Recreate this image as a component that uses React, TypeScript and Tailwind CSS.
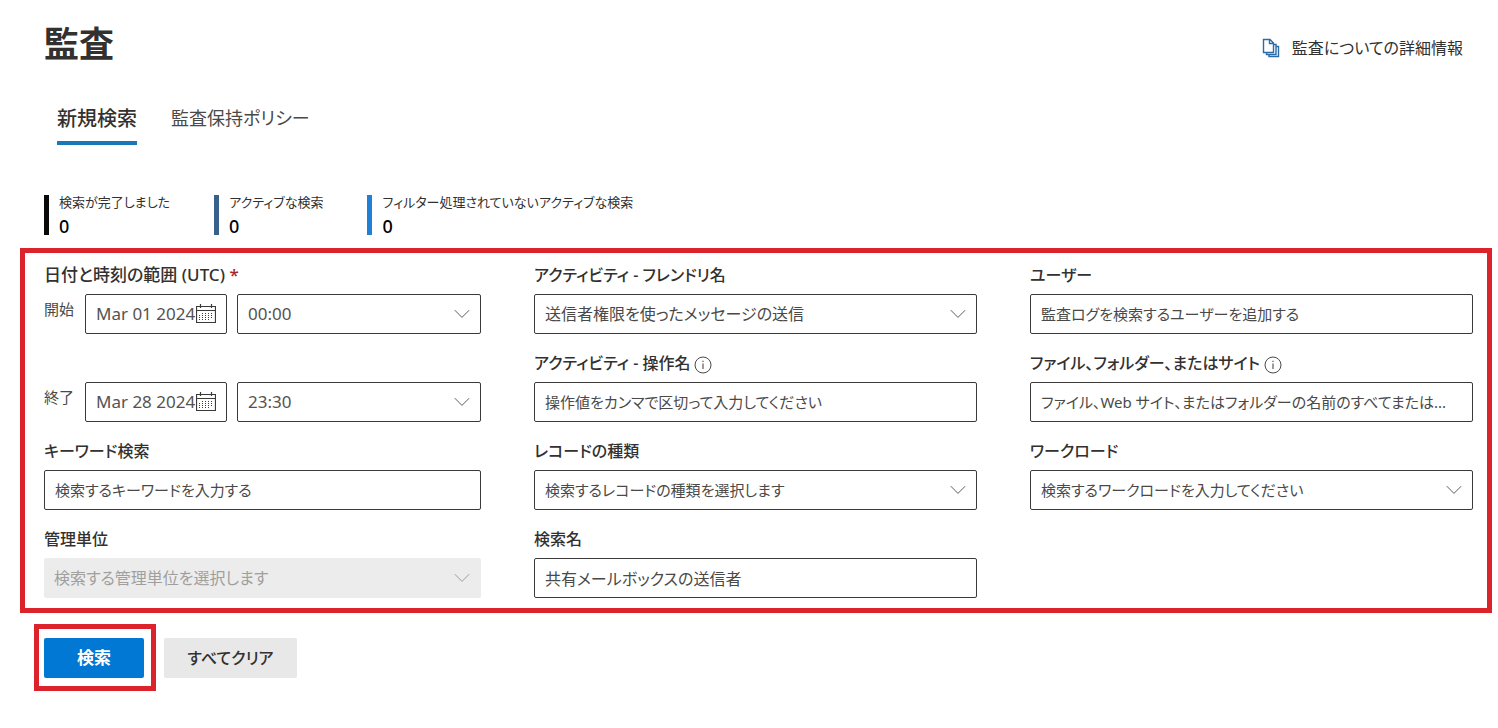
import type { ReactNode } from "react";

const boxClass = "block h-10 w-full rounded-xs border border-[#3b3a39] bg-white px-2.5 leading-6";
const promptClass = "text-[15px] text-[#4a4948] placeholder:text-[#4a4948] placeholder:opacity-100";
const valueClass = "text-[16px] text-[#4a4948]";

function ChevronDown({ className = "text-[#4a4948]" }: { className?: string }) {
  return (
    <svg
      aria-hidden="true"
      className={`pointer-events-none absolute top-3 right-[11px] h-4 w-4 ${className}`}
      viewBox="0 0 16 16"
      fill="none"
      stroke="currentColor"
      strokeWidth="0.9"
    >
      <path d="M0.8 4.2 8 11.4l7.2-7.2" />
    </svg>
  );
}

function CalendarIcon() {
  return (
    <svg aria-hidden="true" className="h-5 w-5" viewBox="0 0 20 20" fill="none" stroke="currentColor">
      <path d="M0.5 2.5h19v16h-19zM0.5 6.5h19M4.5 0v4M15.5 0v4" strokeWidth="1.2" />
      <path d="M6 9.5h11M3 11.5h14M3 13.5h14M3 15.5h11" strokeWidth="1" strokeDasharray="1 2" />
    </svg>
  );
}

function InfoIcon() {
  return (
    <svg
      aria-hidden="true"
      className="mt-1 ml-1 h-[18px] w-[18px] text-[#4a4948]"
      viewBox="0 0 18 18"
      fill="none"
      stroke="currentColor"
    >
      <circle cx="9" cy="9" r="8" strokeWidth="1" />
      <path d="M9 7.6V13M9 4.8V6" strokeWidth="1.1" />
    </svg>
  );
}

function DocumentsIcon() {
  return (
    <svg
      aria-hidden="true"
      className="h-5 w-5 text-[#2b6ca8]"
      viewBox="0 0 20 20"
      fill="none"
      stroke="currentColor"
      strokeWidth="1.4"
    >
      <path d="M1.5 1.5h6.5l3.5 3.5v9.5h-10zM7.5 1.5v4h4" />
      <path d="M4.5 14.5v2h9.5V6.5h-2.5" />
      <path d="M7 16.5v2h9.5V8.5h-2.5" />
    </svg>
  );
}

function Field({
  id,
  label,
  info = false,
  children,
}: {
  id: string;
  label: string;
  info?: boolean;
  children: ReactNode;
}) {
  return (
    <div>
      <div className="mb-1.5 flex h-[26px] items-center">
        <label htmlFor={id} className="text-[16px] leading-[26px] font-medium whitespace-nowrap text-[#323130]">
          {label}
        </label>
        {info && <InfoIcon />}
      </div>
      {children}
    </div>
  );
}

function Select({
  id,
  value,
  label,
  textClass = valueClass,
}: {
  id: string;
  value: string;
  label?: string;
  textClass?: string;
}) {
  return (
    <div className="relative min-w-0 flex-1">
      <select id={id} aria-label={label} className={`${boxClass} ${textClass} appearance-none`}>
        <option>{value}</option>
      </select>
      <ChevronDown />
    </div>
  );
}

function DateRow({ id, name, date, time }: { id: string; name: string; date: string; time: string }) {
  return (
    <div className="flex">
      <label htmlFor={id} className="w-[41px] shrink-0 pt-1 text-[15px] leading-[22px] text-[#4a4948]">
        {name}
      </label>
      <div className="mr-2.5 flex h-10 w-[142px] shrink-0 items-center rounded-xs border border-[#3b3a39] px-2.5">
        <input
          id={id}
          defaultValue={date}
          className="min-w-0 flex-1 bg-transparent text-[17px] leading-6 text-[#55534f]"
        />
        <button type="button" aria-label={`${name}日を選択`} className="shrink-0 text-[#3b3a39]">
          <CalendarIcon />
        </button>
      </div>
      <Select id={`${id}-time`} value={time} label={`${name}時刻`} textClass="text-[17px] text-[#55534f]" />
    </div>
  );
}

function Stat({ label, value, className }: { label: string; value: number; className: string }) {
  return (
    <div className={`h-10 border-l-[5px] pl-2.5 ${className}`}>
      <dt className="text-[13px] leading-[14px] whitespace-nowrap text-[#323130]">{label}</dt>
      <dd className="mt-1.5 text-[18px] leading-[22px] font-medium text-black">{value}</dd>
    </div>
  );
}

export default function App() {
  return (
    <main className="min-h-screen bg-white pt-6 pb-9 font-['Noto_Sans','Noto_Sans_CJK_JP',sans-serif] text-[#323130] [font-feature-settings:'palt']">
      <header className="flex items-center justify-between pr-[35px] pl-11">
        <h1 className="text-[35px] leading-10 font-bold">監査</h1>
        <a href="#details" className="mt-2 flex items-center gap-2.5 text-[16px] leading-6">
          <DocumentsIcon />
          監査についての詳細情報
        </a>
      </header>

      <nav className="mt-9 flex gap-[34px] pl-[57px]">
        <a
          href="#new-search"
          aria-current="page"
          className="border-b-4 border-[#1b77b5] pb-1 text-[20px] leading-[37px] font-medium"
        >
          新規検索
        </a>
        <a href="#retention" className="text-[18px] leading-[37px] text-[#4a4948]">
          監査保持ポリシー
        </a>
      </nav>

      <dl className="mt-[50px] flex gap-11 pl-11">
        <Stat label="検索が完了しました" value={0} className="border-[#0a0a0a]" />
        <Stat label="アクティブな検索" value={0} className="border-[#37618a]" />
        <Stat label="フィルター処理されていないアクティブな検索" value={0} className="border-[#2080d8]" />
      </dl>

      <form onSubmit={(event) => event.preventDefault()}>
        <div className="mt-[13px] mr-1.5 ml-5 grid grid-cols-[437fr_443fr_443fr] gap-x-[53px] gap-y-4 border-[5px] border-[#dc232b] pt-[9px] pr-3.5 pb-2.5 pl-[19px]">
          <fieldset className="row-span-2 min-w-0">
            <legend className="mb-1.5 text-[17px] leading-[26px] font-medium">
              日付と時刻の範囲 (UTC) <span className="text-[#a4262c]">*</span>
            </legend>
            <div className="flex flex-col gap-12">
              <DateRow id="start" name="開始" date="Mar 01 2024" time="00:00" />
              <DateRow id="end" name="終了" date="Mar 28 2024" time="23:30" />
            </div>
          </fieldset>

          <Field id="activity" label="アクティビティ - フレンドリ名">
            <Select id="activity" value="送信者権限を使ったメッセージの送信" />
          </Field>
          <Field id="user" label="ユーザー">
            <input
              id="user"
              className={`${boxClass} ${promptClass}`}
              placeholder="監査ログを検索するユーザーを追加する"
            />
          </Field>

          <Field id="operation" label="アクティビティ - 操作名" info>
            <input
              id="operation"
              className={`${boxClass} ${promptClass}`}
              placeholder="操作値をカンマで区切って入力してください"
            />
          </Field>
          <Field id="file" label="ファイル、フォルダー、またはサイト" info>
            <input
              id="file"
              className={`${boxClass} ${promptClass}`}
              placeholder="ファイル、Web サイト、またはフォルダーの名前のすべてまたは..."
            />
          </Field>

          <Field id="keyword" label="キーワード検索">
            <input id="keyword" className={`${boxClass} ${promptClass}`} placeholder="検索するキーワードを入力する" />
          </Field>
          <Field id="record" label="レコードの種類">
            <Select id="record" value="検索するレコードの種類を選択します" textClass={promptClass} />
          </Field>
          <Field id="workload" label="ワークロード">
            <Select id="workload" value="検索するワークロードを入力してください" textClass={promptClass} />
          </Field>

          <Field id="unit" label="管理単位">
            <div className="relative">
              <select
                id="unit"
                disabled
                className="block h-10 w-full appearance-none rounded-xs bg-[#ececec] px-2.5 text-[16px] leading-6 text-[#a19f9d] opacity-100"
              >
                <option>検索する管理単位を選択します</option>
              </select>
              <ChevronDown className="text-[#969492]" />
            </div>
          </Field>
          <Field id="name" label="検索名">
            <input id="name" className={`${boxClass} ${valueClass}`} defaultValue="共有メールボックスの送信者" />
          </Field>
        </div>

        <div className="mt-[11px] ml-[34px] flex items-center gap-2">
          <div className="border-[5px] border-[#dc232b] pt-[9px] pr-[7px] pb-2 pl-[5px]">
            <button type="submit" className="block h-10 w-[100px] rounded-xs bg-[#0078d4] text-[17px] font-bold text-white">
              検索
            </button>
          </div>
          <button type="reset" className="h-10 w-[133px] rounded-xs bg-[#e8e8e8] text-[16px] font-medium text-[#323130]">
            すべてクリア
          </button>
        </div>
      </form>
    </main>
  );
}
